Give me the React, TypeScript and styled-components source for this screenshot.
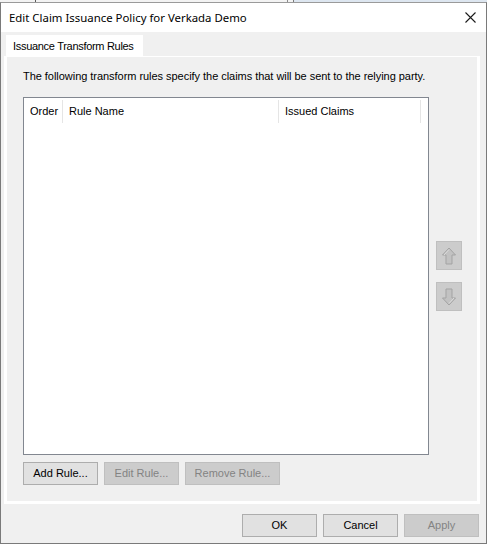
import React from "react";
import styled, { createGlobalStyle } from "styled-components";

const Global = createGlobalStyle`
  html, body { margin: 0; padding: 0; background: #f0f0f0; }
  body { font-family: "Liberation Sans", Arial, sans-serif; font-size: 11px; color: #000; }
  * { box-sizing: border-box; }
`;

const Screen = styled.div`
  width: 487px;
  height: 544px;
  display: flex;
  flex-direction: column;
  overflow: hidden;
`;

const BackStrip = styled.div`
  height: 2px;
  flex: none;
  background: linear-gradient(90deg, #f3f3f3 0 35px, #5a5a5a 35px 36px, #f3f3f3 36px 287px, #8a8a8a 287px 288px, #f3f3f3 288px 293px, #7a7a7a 293px 294px, #dde6f0 294px 100%);
`;

const Window = styled.div`
  flex: 1;
  display: flex;
  flex-direction: column;
  border: 1px solid #7a7a7a;
  border-top-color: #9a9a9a;
  background: #f0f0f0;
`;

const TitleBar = styled.div`
  height: 29px;
  flex: none;
  background: #fff;
  display: flex;
  align-items: center;
  justify-content: space-between;
  padding: 0 10px 0 8px;
`;

const Title = styled.div`
  font-family: "Noto Sans", "Segoe UI", sans-serif;
  font-size: 11.4px;
  color: #000;
  padding-bottom: 1px;
`;

const Body = styled.div`
  flex: 1;
  display: flex;
  flex-direction: column;
  padding: 3px 6px 0 3px;
`;

const TabStrip = styled.div`
  display: flex;
  height: 21px;
  padding-left: 2px;
`;

const Tab = styled.div`
  background: #fff;
  width: 137px;
  padding: 0 0 0 7px;
  display: flex;
  align-items: center;
  white-space: nowrap;
  letter-spacing: -0.3px;
`;

const Panel = styled.div`
  height: 448px;
  border: 3px solid #fff;
  border-top-width: 1px;
  display: flex;
  flex-direction: column;
  padding: 13px 0 0 16px;
`;

const Description = styled.div`
  line-height: 13px;
  height: 13px;
  margin-bottom: 14px;
  white-space: nowrap;
  letter-spacing: -0.04px;
`;

const ListRow = styled.div`
  display: flex;
  gap: 7px;
`;

const ListView = styled.div`
  width: 406px;
  height: 358px;
  border: 1px solid #828790;
  background: #fff;
`;

const Header = styled.div`
  display: flex;
  height: 26px;
  padding-top: 2px;
`;

const Column = styled.div<{ $w: number }>`
  width: ${(p) => p.$w}px;
  height: 23px;
  border-right: 1px solid #e5e5e5;
  display: flex;
  align-items: center;
  padding: 0 0 1px 6px;
`;

const ArrowCol = styled.div`
  display: flex;
  flex-direction: column;
  gap: 12px;
  padding-top: 144px;
`;

const ArrowButton = styled.div`
  width: 26px;
  height: 29px;
  background: #cccccc;
  border: 1px solid #bfbfbf;
  display: flex;
  align-items: center;
  justify-content: center;
`;

const ButtonRow = styled.div`
  display: flex;
  gap: 6px;
  margin-top: 7px;
`;

const Button = styled.div<{ $w?: number; $disabled?: boolean }>`
  width: ${(p) => p.$w ?? 75}px;
  height: 23px;
  display: flex;
  align-items: center;
  justify-content: center;
  padding-bottom: 1px;
  background: ${(p) => (p.$disabled ? "#cccccc" : "#e1e1e1")};
  border: 1px solid ${(p) => (p.$disabled ? "#bfbfbf" : "#adadad")};
  color: ${(p) => (p.$disabled ? "#838383" : "#000")};
`;

const Footer = styled.div`
  display: flex;
  justify-content: flex-end;
  gap: 6px;
  padding: 10px 1px 0 0;
`;

const Arrow = ({ down }: { down?: boolean }) => (
  <svg width="16" height="18" viewBox="0 0 16 18" style={{ transform: down ? "rotate(180deg)" : undefined }}>
    <path
      d="M8 1 L14.5 8 L11 8 L11 17 L5 17 L5 8 L1.5 8 Z"
      fill="#c2c2c2"
      stroke="#a3a3a3"
      strokeWidth="1"
      strokeLinejoin="miter"
    />
    <path d="M8 2.5 L3 8" stroke="#dcdcdc" strokeWidth="1" fill="none" />
  </svg>
);

export default function App() {
  return (
    <Screen>
      <Global />
      <BackStrip />
      <Window>
        <TitleBar>
          <Title>Edit Claim Issuance Policy for Verkada Demo</Title>
          <svg width="11" height="11" viewBox="0 0 11 11">
            <path d="M0.5 0.5 L10.5 10.5 M10.5 0.5 L0.5 10.5" stroke="#1a1a1a" strokeWidth="1.1" />
          </svg>
        </TitleBar>
        <Body>
          <TabStrip>
            <Tab>Issuance Transform Rules</Tab>
          </TabStrip>
          <Panel>
            <Description>
              The following transform rules specify the claims that will be sent to the relying party.
            </Description>
            <ListRow>
              <ListView>
                <Header>
                  <Column $w={39}>Order</Column>
                  <Column $w={216}>Rule Name</Column>
                  <Column $w={142}>Issued Claims</Column>
                </Header>
              </ListView>
              <ArrowCol>
                <ArrowButton>
                  <Arrow />
                </ArrowButton>
                <ArrowButton>
                  <Arrow down />
                </ArrowButton>
              </ArrowCol>
            </ListRow>
            <ButtonRow>
              <Button>Add Rule...</Button>
              <Button $disabled>Edit Rule...</Button>
              <Button $disabled $w={95}>Remove Rule...</Button>
            </ButtonRow>
          </Panel>
          <Footer>
            <Button>OK</Button>
            <Button>Cancel</Button>
            <Button $disabled>Apply</Button>
          </Footer>
        </Body>
      </Window>
    </Screen>
  );
}
